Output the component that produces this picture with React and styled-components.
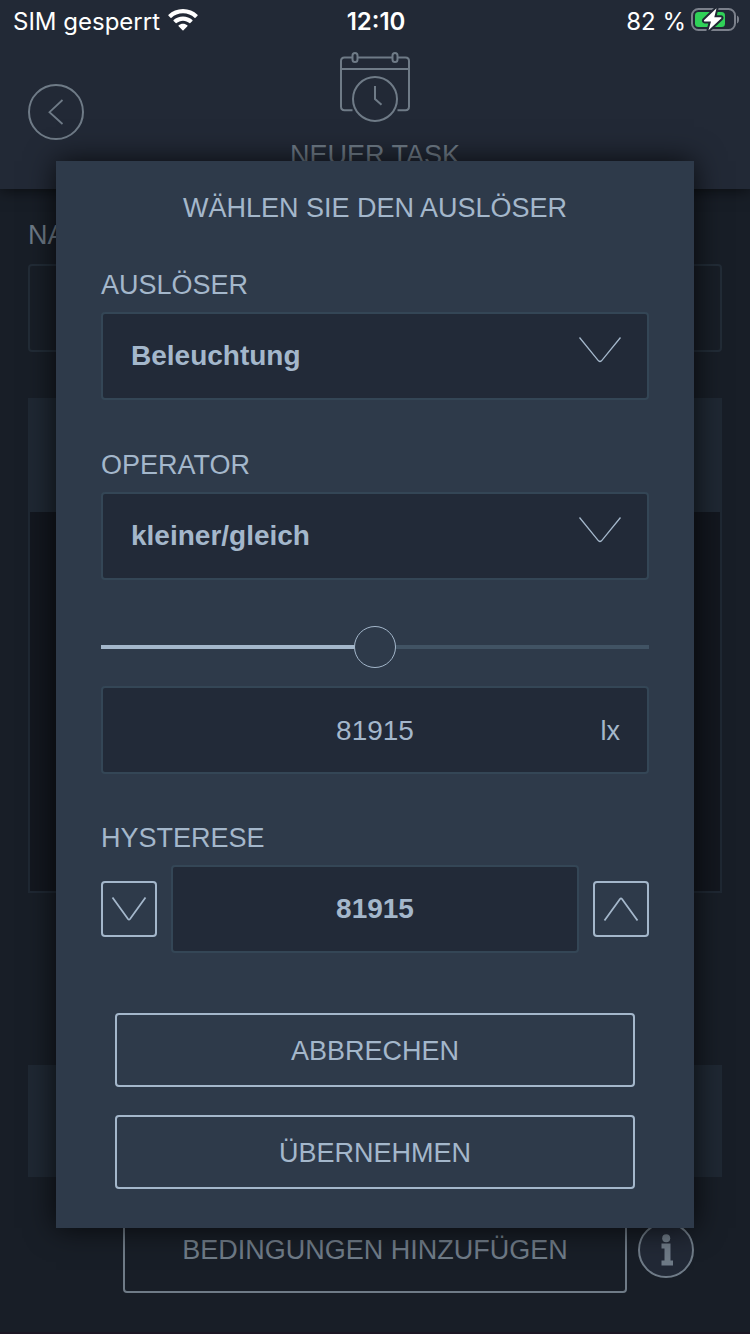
import React, { useState } from "react";
import styled, { createGlobalStyle, css } from "styled-components";

const c = {
  page: "#181e27",
  header: "#222936",
  strip: "#1f2833",
  modal: "#2e3a4a",
  field: "#222a38",
  fieldBorder: "#344656",
  text: "#a4b7cb",
  dim: "#6f7b87",
  dimBorder: "#222c37",
};

const GlobalStyle = createGlobalStyle`
  *, *::before, *::after { box-sizing: border-box; }
  body {
    margin: 0;
    background: ${c.page};
    color: ${c.text};
    font-family: "Liberation Sans", Arial, Helvetica, sans-serif;
    font-size: 27px;
  }
  button, input, select { font: inherit; color: inherit; margin: 0; }
`;

const Screen = styled.div`
  position: relative;
  min-height: 100vh;
  display: flex;
  flex-direction: column;
  border-bottom: 2px solid #1b1624;
`;

const Header = styled.header`
  background: ${c.header};
  box-shadow: 0 2px 14px rgba(0, 0, 0, 0.55);
  padding-bottom: 17px;
`;

const StatusBar = styled.div`
  display: grid;
  grid-template-columns: 1fr auto 1fr;
  align-items: center;
  height: 42px;
  padding: 0 11px 0 13px;
  font-family: Inter, "Liberation Sans", sans-serif;
  font-size: 24px;
  color: #fff;
`;

const StatusGroup = styled.span`
  display: flex;
  align-items: center;
  gap: ${(p) => p.$gap};
  justify-content: ${(p) => (p.$end ? "flex-end" : "flex-start")};
`;

const Clock = styled.time`
  font-weight: 600;
`;

const TitleBar = styled.div`
  display: grid;
  grid-template-columns: 1fr auto 1fr;
  align-items: center;
  padding: 10px 28px 0;
`;

const RoundButton = styled.button`
  display: grid;
  place-items: center;
  width: 56px;
  height: 56px;
  padding: 0;
  border: 2px solid ${c.dim};
  border-radius: 50%;
  background: ${c.header};
  color: ${c.dim};
`;

const PageTitle = styled.h1`
  display: flex;
  flex-direction: column;
  align-items: center;
  gap: 16px;
  margin: 0;
  color: ${c.dim};
  font-size: 27px;
  font-weight: 400;
  line-height: 34px;
`;

const Main = styled.main`
  display: flex;
  flex-direction: column;
  padding: 32px 28px 39px;
  color: ${c.dim};
`;

const TaskName = styled.div`
  display: flex;
  flex-direction: column;
  gap: 15px;
  line-height: 28px;
`;

const TaskInput = styled.input`
  width: 100%;
  height: 88px;
  padding: 0 28px;
  border: 2px solid ${c.dimBorder};
  border-radius: 4px;
  background: transparent;
`;

const Panel = styled.section`
  margin-top: 46px;
  border: 2px solid ${c.strip};
  background: #13171f;
`;

const PanelHead = styled.div`
  height: 112px;
  background: ${c.strip};
`;

const PanelBody = styled.div`
  height: 379px;
`;

const Strip = styled.section`
  height: 112px;
  margin-top: 172px;
  background: ${c.strip};
`;

const ConditionRow = styled.div`
  display: grid;
  grid-template-columns: 1fr minmax(0, 504px) 1fr;
  align-items: center;
  column-gap: 11px;
  margin: 30px -11px 0;
`;

const outlined = css`
  padding: 0;
  border: 2px solid currentColor;
  border-radius: 4px;
  background: transparent;
`;

const ConditionButton = styled.button`
  ${outlined}
  grid-column: 2;
  height: 86px;
  color: ${c.dim};
`;

const Overlay = styled.div`
  position: absolute;
  inset: 0;
  padding: 161px 56px 0;
`;

const Dialog = styled.form`
  display: flex;
  flex-direction: column;
  padding: 32px 45px 39px;
  background: ${c.modal};
  box-shadow: 0 0 28px rgba(0, 0, 0, 0.75);
`;

const DialogTitle = styled.h2`
  margin: 0 0 48px;
  font-size: 27px;
  font-weight: 400;
  line-height: 30px;
  text-align: center;
`;

const Group = styled.div`
  display: flex;
  flex-direction: column;
  gap: ${(p) => p.$gap || "13px"};
  margin-bottom: ${(p) => p.$after};
`;

const Label = styled.label`
  line-height: 28px;
`;

const fieldBox = css`
  display: block;
  width: 100%;
  height: 88px;
  border: 2px solid ${c.fieldBorder};
  border-radius: 4px;
  background: ${c.field};
  color: ${c.text};
  font-size: 28px;
  outline: none;
`;

const FieldWrap = styled.div`
  position: relative;
  flex: 1;
  min-width: 0;
`;

const Select = styled.select`
  ${fieldBox}
  appearance: none;
  padding: 0 80px 2px 28px;
  font-weight: 700;
`;

const NumberBox = styled.input`
  ${fieldBox}
  padding: ${(p) => (p.$bold ? "0 56px" : "2px 56px 0")};
  text-align: center;
  font-weight: ${(p) => (p.$bold ? 700 : 400)};
`;

const SelectArrow = styled.svg`
  position: absolute;
  top: 24px;
  right: 27px;
  pointer-events: none;
`;

const Unit = styled.span`
  position: absolute;
  inset: 2px 29px 0 auto;
  display: flex;
  align-items: center;
`;

const Slider = styled.input`
  appearance: none;
  display: block;
  width: 100%;
  height: 42px;
  background: transparent;
  outline: none;

  &::-webkit-slider-runnable-track {
    height: 4px;
    background: linear-gradient(
      to right,
      ${c.text} var(--fill),
      #415364 var(--fill)
    );
  }

  &::-webkit-slider-thumb {
    appearance: none;
    width: 42px;
    height: 42px;
    margin-top: -19px;
    border: 1px solid ${c.text};
    border-radius: 50%;
    background: ${c.modal};
  }
`;

const Stepper = styled.div`
  display: flex;
  align-items: center;
  gap: 14px;
`;

const StepButton = styled.button`
  ${outlined}
  display: grid;
  place-items: center;
  width: 56px;
  height: 56px;
  color: ${c.text};
`;

const Actions = styled.div`
  display: flex;
  flex-direction: column;
  gap: 28px;
  padding: 0 14px;
`;

const ActionButton = styled.button`
  ${outlined}
  height: 74px;
  padding-top: 2px;
  color: ${c.text};
`;

const WifiIcon = () => (
  <svg width="30" height="24" viewBox="0 0 30 24" fill="#fff" aria-hidden="true">
    <path d="M15 0C9.300 0 4.200 2.200 0.500 5.800C0.200 6.100 0.200 6.500 0.500 6.800L2.500 8.800C2.800 9.100 3.200 9.100 3.500 8.800C6.500 6 10.500 4.300 15 4.300S23.500 6 26.500 8.800C26.800 9.100 27.200 9.100 27.500 8.800L29.500 6.800C29.800 6.500 29.800 6.100 29.500 5.800C25.800 2.200 20.700 0 15 0Z" />
    <path d="M15 7.400C11.400 7.400 8.100 8.800 5.600 11C5.300 11.300 5.300 11.700 5.600 12L7.700 14.100C8 14.400 8.300 14.400 8.600 14.100C10.300 12.600 12.500 11.700 15 11.700S19.700 12.600 21.400 14.100C21.700 14.400 22 14.400 22.300 14.100L24.400 12C24.700 11.700 24.700 11.300 24.400 11C21.900 8.800 18.600 7.400 15 7.400Z" />
    <path d="M15 14.700C13.300 14.700 11.800 15.300 10.700 16.300C10.300 16.600 10.300 17 10.600 17.300L14.500 21.200C14.800 21.500 15.200 21.500 15.500 21.200L19.400 17.300C19.700 17 19.700 16.600 19.300 16.300C18.200 15.300 16.700 14.700 15 14.700Z" />
  </svg>
);

const BatteryIcon = () => (
  <svg width="48" height="26" viewBox="0 2 48 26" aria-hidden="true">
    <rect x="1" y="3" width="43" height="21" rx="6.500" fill="none" stroke="#7b808b" strokeWidth="2" />
    <path d="M46 9.500C47.600 10.200 48 11.800 48 13.500S47.600 16.800 46 17.500Z" fill="#7b808b" />
    <rect x="4" y="6" width="30" height="15" rx="3.500" fill="#30d158" />
    <path
      d="M25.500 2.300L13 14.300Q12.600 15.200 13.500 15.400H20L17.500 24.300L30.400 12.300Q30.800 11.400 29.900 11.200H23.300Z"
      fill="#fff"
      stroke={c.header}
      strokeWidth="4"
      strokeLinejoin="round"
      paintOrder="stroke"
    />
  </svg>
);

const BackIcon = () => (
  <svg width="28" height="28" viewBox="0 0 28 28" fill="none" stroke="currentColor" strokeWidth="1.800" aria-hidden="true">
    <path d="M20.500 2L7.500 14.200L20.500 26" />
  </svg>
);

const CalendarClockIcon = () => (
  <svg width="70" height="70" viewBox="0 0 70 70" fill="none" stroke="currentColor" strokeWidth="2" aria-hidden="true">
    <path d="M12.500 58.300H4.500Q1 58.300 1 54.500V9Q1 5.500 4.500 5.500H12.500M17.500 5.500H52.500M57.500 5.500H65.500Q69 5.500 69 9V54.500Q69 58.300 65.500 58.300H57.500M1 17H69" />
    <rect x="12.500" y="1" width="5" height="9" rx="2.500" />
    <rect x="52.500" y="1" width="5" height="9" rx="2.500" />
    <circle cx="35" cy="47" r="22" />
    <path d="M35 34V47L41.500 52.800" />
  </svg>
);

const InfoIcon = () => (
  <svg width="14" height="32" viewBox="-2 0 14 32" fill="currentColor" aria-hidden="true">
    <circle cx="5.200" cy="4.300" r="4" />
    <path d="M0.500 9.500H9.500V26.500H12V31.500H0.500V26.500H3.500V14.500H0.500Z" />
  </svg>
);

const ChevronDown = () => (
  <SelectArrow width="44" height="28" viewBox="0 0 44 28" fill="none" stroke="currentColor" strokeWidth="1.300" aria-hidden="true">
    <path d="M1.500 1.500L20.500 24.800Q22 26.200 23.500 24.800L42.500 1.500" />
  </SelectArrow>
);

const StepIcon = ({ up }) => (
  <svg width="36" height="26" viewBox="0 0 36 26" fill="none" stroke="currentColor" strokeWidth="1.800" aria-hidden="true">
    <path d={up ? "M1.500 24.500L17 3Q18 1.800 19 3L34.500 24.500" : "M1.500 1.500L17 23Q18 24.200 19 23L34.500 1.500"} />
  </svg>
);

const MAX_LUX = 163830;

export default function App() {
  const [lux, setLux] = useState(81915);
  const [hysteresis, setHysteresis] = useState(81915);

  return (
    <>
      <GlobalStyle />
      <Screen>
        <Header>
          <StatusBar>
            <StatusGroup $gap="8px">
              SIM gesperrt <WifiIcon />
            </StatusGroup>
            <Clock>12:10</Clock>
            <StatusGroup $gap="5px" $end>
              82 % <BatteryIcon />
            </StatusGroup>
          </StatusBar>
          <TitleBar>
            <RoundButton type="button" aria-label="Zurück">
              <BackIcon />
            </RoundButton>
            <PageTitle>
              <CalendarClockIcon />
              NEUER TASK
            </PageTitle>
          </TitleBar>
        </Header>

        <Main>
          <TaskName>
            <label htmlFor="task-name">NAME</label>
            <TaskInput id="task-name" type="text" />
          </TaskName>
          <Panel>
            <PanelHead />
            <PanelBody />
          </Panel>
          <Strip />
          <ConditionRow>
            <ConditionButton type="button">BEDINGUNGEN HINZUFÜGEN</ConditionButton>
            <RoundButton type="button" aria-label="Info">
              <InfoIcon />
            </RoundButton>
          </ConditionRow>
        </Main>

        <Overlay>
          <Dialog role="dialog" aria-labelledby="dialog-title" onSubmit={(e) => e.preventDefault()}>
            <DialogTitle id="dialog-title">WÄHLEN SIE DEN AUSLÖSER</DialogTitle>

            <Group $after="51px">
              <Label htmlFor="trigger">AUSLÖSER</Label>
              <FieldWrap>
                <Select id="trigger">
                  <option>Beleuchtung</option>
                </Select>
                <ChevronDown />
              </FieldWrap>
            </Group>

            <Group $after="46px">
              <Label htmlFor="operator">OPERATOR</Label>
              <FieldWrap>
                <Select id="operator">
                  <option>kleiner/gleich</option>
                </Select>
                <ChevronDown />
              </FieldWrap>
            </Group>

            <Group $gap="18px" $after="50px">
              <Slider
                type="range"
                aria-label="Beleuchtung"
                min="0"
                max={MAX_LUX}
                value={lux}
                onChange={(e) => setLux(Number(e.target.value))}
                style={{ "--fill": `${(lux / MAX_LUX) * 100}%` }}
              />
              <FieldWrap>
                <NumberBox
                  type="text"
                  inputMode="numeric"
                  aria-label="Beleuchtung in Lux"
                  value={lux}
                  onChange={(e) => setLux(Number(e.target.value) || 0)}
                />
                <Unit>lx</Unit>
              </FieldWrap>
            </Group>

            <Group $after="60px">
              <Label htmlFor="hysteresis">HYSTERESE</Label>
              <Stepper>
                <StepButton type="button" aria-label="Verringern" onClick={() => setHysteresis(hysteresis - 1)}>
                  <StepIcon />
                </StepButton>
                <FieldWrap>
                  <NumberBox
                    id="hysteresis"
                    type="text"
                    inputMode="numeric"
                    $bold
                    value={hysteresis}
                    onChange={(e) => setHysteresis(Number(e.target.value) || 0)}
                  />
                </FieldWrap>
                <StepButton type="button" aria-label="Erhöhen" onClick={() => setHysteresis(hysteresis + 1)}>
                  <StepIcon up />
                </StepButton>
              </Stepper>
            </Group>

            <Actions>
              <ActionButton type="button">ABBRECHEN</ActionButton>
              <ActionButton type="submit">ÜBERNEHMEN</ActionButton>
            </Actions>
          </Dialog>
        </Overlay>
      </Screen>
    </>
  );
}
